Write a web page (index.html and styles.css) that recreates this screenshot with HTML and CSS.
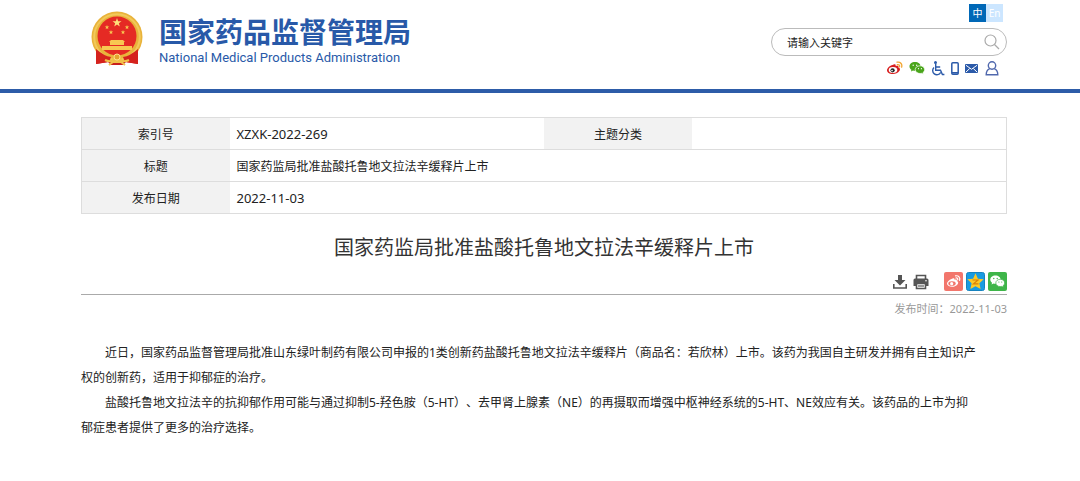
FILE: index.html
```
<!DOCTYPE html>
<html lang="zh-CN">
<head>
  <meta charset="UTF-8">
  <meta name="viewport" content="width=device-width, initial-scale=1">
  <title>国家药监局批准盐酸托鲁地文拉法辛缓释片上市</title>
  <link rel="stylesheet" href="styles.css">
</head>
<body>

  <header class="header">
    <a class="logo" href="#">
      <svg class="emblem" viewBox="0 0 52 56" aria-hidden="true">
        <path d="M6 35 L5 53 L17 51 L20 54 H32 L35 51 L47 53 L46 35Z" fill="#c91f1c"/>
        <circle cx="26" cy="26" r="25.500" fill="#e9b33b"/>
        <circle cx="26" cy="26" r="22.800" fill="none" stroke="#f2c95a" stroke-width="2"/>
        <circle cx="26" cy="25" r="19.500" fill="#e52a24"/>
        <path d="M26 7l1.100 3.200h3.400l-2.700 2 1 3.300-2.800-2-2.800 2 1-3.300-2.700-2h3.400z" fill="#ffe07a"/>
        <g fill="#f8c851">
          <path id="star" d="M16 14l.6 1.600h1.700l-1.400 1 .5 1.700-1.400-1-1.400 1 .5-1.700-1.400-1h1.700z"/>
          <use href="#star" x="4" y="5"/>
          <use href="#star" x="16" y="5"/>
          <use href="#star" x="20"/>
          <path d="M20 29h12l2 2H18zM19 31h14v3H19zM11 35h30v4H11z"/>
        </g>
        <path d="M5 38Q13 45 20 46L18 51L5 53zM47 38Q39 45 32 46l2 5 13 2z" fill="#d5221d"/>
        <path d="M14 49q6 3 9-1l3-2 3 2q3 4 9 1M18 54l4-3h8l4 3" fill="none" stroke="#f1c14a" stroke-width="2"/>
        <circle cx="26" cy="46" r="3" fill="#e4a32f" stroke="#ffe08a"/>
      </svg>
      <span class="logo-text">
        <span class="logo-cn">国家药品监督管理局</span>
        <span class="logo-en">National Medical Products Administration</span>
      </span>
    </a>

    <div class="header-right">
      <nav class="lang">
        <a class="active" href="#">中</a>
        <a href="#">En</a>
      </nav>
      <form class="search">
        <input type="text" placeholder="请输入关键字" aria-label="请输入关键字">
        <button type="button" aria-label="搜索">
          <svg width="16" height="16" viewBox="0 0 16 16" fill="none" stroke="#aaa" stroke-width="1.200"><circle cx="6.500" cy="6.500" r="5.500"/><path d="M10.500 10.500L15 15"/></svg>
        </button>
      </form>
      <nav class="quick">
        <a href="#" aria-label="微博">
          <svg width="16" height="14" viewBox="0 0 16 14">
            <path d="M5.500 4C7.500 2.500 9 3 8.700 5c2-.8 3.300-.2 2.700 1.400C13 7 13.500 8.200 12.500 9.800 11 12 8.500 13 5.800 13 2.500 13 0 11.400 0 9.200 0 7.300 3 4.500 5.500 4z" fill="#d81e1e"/>
            <ellipse cx="6" cy="9" rx="4.300" ry="3" fill="#fff"/>
            <circle cx="5.600" cy="9.300" r="2.100" fill="#222"/><circle cx="5" cy="9.600" r=".8" fill="#fff"/>
            <path d="M10 1.200c3.200-.8 5.600 1.800 4.600 5M10.400 3.600c1.500-.3 2.500.7 2.100 2.200" fill="none" stroke="#f2a531" stroke-width="1.300" stroke-linecap="round"/>
          </svg>
        </a>
        <a href="#" aria-label="微信">
          <svg width="16" height="14" viewBox="0 0 16 14">
            <path d="M6 1C2.600 1 .5 3 .5 5.400c0 1.400.7 2.500 1.900 3.300L2 10.500l2-1c.7.200 1.300.3 2 .3C9.300 9.800 11.500 8 11.500 5.400S9.300 1 6 1z" fill="#4aa51b"/>
            <path d="M11 4.800c-2.800 0-4.800 1.700-4.800 3.800s2 3.900 4.800 3.900c.6 0 1.100-.1 1.600-.2l1.700.9-.4-1.500c1-.7 1.700-1.800 1.700-3.100 0-2.100-2-3.800-4.600-3.800z" fill="#4aa51b" stroke="#fff" stroke-width=".7"/>
            <g fill="#fff"><circle cx="4.200" cy="4.200" r=".7"/><circle cx="7.700" cy="4.200" r=".7"/><circle cx="9.500" cy="7.700" r=".6"/><circle cx="12.400" cy="7.700" r=".6"/></g>
          </svg>
        </a>
        <a href="#" aria-label="无障碍">
          <svg width="14" height="15" viewBox="0 0 14 15" fill="none" stroke="#2b5aa9" stroke-width="1.400">
            <circle cx="4.500" cy="1.600" r="1.500" fill="#2b5aa9" stroke="none"/><path d="M4.700 3v6.300h4.800l1.900 4.200h2M4.700 6h4.500M3 6.500a4.200 4.200 0 1 0 6.600 5"/>
          </svg>
        </a>
        <a href="#" aria-label="移动端">
          <svg width="8" height="13" viewBox="0 0 8 13"><rect x=".8" y=".8" width="6.400" height="11.400" rx="1" fill="#fff" stroke="#2b5aa9" stroke-width="1.500"/><path d="M1 10.800h6" stroke="#2b5aa9" stroke-width="1.600"/></svg>
        </a>
        <a href="#" aria-label="邮箱">
          <svg width="13" height="9" viewBox="0 0 13 9"><rect width="13" height="9" rx="1" fill="#2b5aa9"/><path d="M1 1.300l5.500 4 5.500-4M1 8l3.700-3.500M12 8L8.300 4.500" fill="none" stroke="#fff"/></svg>
        </a>
        <a class="user" href="#" aria-label="个人中心">
          <svg width="14" height="15" viewBox="0 0 14 15" fill="none" stroke="#5068ad" stroke-width="1.400"><circle cx="7" cy="4.500" r="3.700"/><path d="M4.800 7.700C2.500 8.700 1.200 10.500 1.200 13.800h11.600c0-3.300-1.300-5.100-3.600-6.100"/></svg>
        </a>
      </nav>
    </div>
  </header>

  <main class="content">
    <table class="info">
      <tr>
        <th scope="row">索引号</th>
        <td>XZXK-2022-269</td>
        <th scope="row">主题分类</th>
        <td></td>
      </tr>
      <tr>
        <th scope="row">标题</th>
        <td class="cn" colspan="3">国家药监局批准盐酸托鲁地文拉法辛缓释片上市</td>
      </tr>
      <tr>
        <th scope="row">发布日期</th>
        <td colspan="3">2022-11-03</td>
      </tr>
    </table>

    <h1>国家药监局批准盐酸托鲁地文拉法辛缓释片上市</h1>

    <div class="tools">
      <button type="button" aria-label="下载">
        <svg width="14" height="16" viewBox="0 0 14 16" fill="#555"><path d="M5 1h4v5h3.500L7 11.500 1.500 6H5z"/><path d="M.8 10v4h12.400v-4" fill="none" stroke="#555" stroke-width="1.600"/></svg>
      </button>
      <button type="button" aria-label="打印">
        <svg width="16" height="16" viewBox="0 0 16 16"><path d="M3.500 5V1.500h9V5M3.500 9.500v5h9v-5z" fill="#fff" stroke="#555" stroke-width="1.600"/><path d="M2 4.500h12a1.500 1.500 0 0 1 1.500 1.500v6H13V9H3v3H.5V6A1.500 1.500 0 0 1 2 4.500z" fill="#555"/><path d="M5 12h6" stroke="#555" stroke-width="1.200"/><circle cx="13" cy="6.700" r=".8" fill="#fff"/></svg>
      </button>
      <a class="share first" href="#" aria-label="分享到微博">
        <svg width="19" height="19" viewBox="0 0 19 19">
          <rect width="19" height="19" rx="2" fill="#f2766c"/>
          <path d="M7.500 7c1.800-1.400 3.400-1 3 .8 1.700-.6 2.800 0 2.300 1.300 1.400.5 1.800 1.600 1 2.900-1.200 1.900-3.300 2.800-5.800 2.800-3 0-5-1.300-5-3.200C3 9.900 5.300 7.600 7.500 7z" fill="#fff"/>
          <ellipse cx="8" cy="11.500" rx="3.700" ry="2.300" fill="#f2766c"/><circle cx="7.700" cy="11.700" r="1.600" fill="#fff"/>
          <path d="M11.500 3.900c3-.7 5 1.600 4.100 4.500M11.900 6c1.500-.2 2.100.7 1.800 1.900" fill="none" stroke="#fff" stroke-width="1.200" stroke-linecap="round"/>
        </svg>
      </a>
      <a class="share" href="#" aria-label="分享到QQ空间">
        <svg width="19" height="19" viewBox="0 0 19 19">
          <rect x=".5" y=".5" width="18" height="18" rx="2" fill="#189be2" stroke="#1683bf"/>
          <path d="M9.500 1.300l2.400 5.400 5.800.6-4.300 3.900 1.200 5.900-5.100-2.900-5.100 2.900 1.200-5.900-4.300-3.900 5.800-.6z" fill="#fcc927"/>
          <path d="M6.500 8h5.500l-4.500 3.800h5" fill="none" stroke="#d98207" stroke-width="1.200"/>
        </svg>
      </a>
      <a class="share" href="#" aria-label="分享到微信">
        <svg width="19" height="19" viewBox="0 0 19 19">
          <rect width="19" height="19" rx="2" fill="#3eb549"/>
          <path d="M7.500 3.500C4.500 3.500 2.300 5.300 2.300 7.600c0 1.300.6 2.400 1.700 3.100l-.4 1.700 1.900-1c.6.200 1.300.3 2 .3 2.900 0 5.100-1.800 5.100-4.100S10.400 3.500 7.500 3.500z" fill="#fff"/>
          <path d="M12.300 7.300c-2.500 0-4.500 1.600-4.500 3.600s2 3.700 4.500 3.700c.5 0 1-.1 1.500-.2l1.600.9-.4-1.500c1-.7 1.600-1.700 1.600-2.900 0-2-1.800-3.600-4.300-3.600z" fill="#fff" stroke="#3eb549" stroke-width=".7"/>
          <g fill="#3eb549"><circle cx="5.800" cy="6.500" r=".7"/><circle cx="9.200" cy="6.500" r=".7"/><circle cx="10.900" cy="10" r=".6"/><circle cx="13.700" cy="10" r=".6"/></g>
        </svg>
      </a>
    </div>

    <div class="date">发布时间：2022-11-03</div>

    <article class="text">
      <p>近日，国家药品监督管理局批准山东绿叶制药有限公司申报的1类创新药盐酸托鲁地文拉法辛缓释片（商品名：若欣林）上市。该药为我国自主研发并拥有自主知识产权的创新药，适用于抑郁症的治疗。</p>
      <p>盐酸托鲁地文拉法辛的抗抑郁作用可能与通过抑制5-羟色胺（5-HT）、去甲肾上腺素（NE）的再摄取而增强中枢神经系统的5-HT、NE效应有关。该药品的上市为抑郁症患者提供了更多的治疗选择。</p>
    </article>
  </main>

</body>
</html>
```
FILE: styles.css
```
* {
  box-sizing: border-box;
}

body {
  margin: 0;
  background-color: #fff;
  color: #222;
  font-family: "Noto Sans", "Noto Sans CJK SC", sans-serif;
  font-size: 12px;
}

a {
  color: inherit;
  text-decoration: none;
}

svg {
  display: block;
}

button {
  padding: 0;
  border: none;
  background: none;
  cursor: pointer;
}

.header {
  display: flex;
  justify-content: space-between;
  align-items: flex-start;
  padding: 4px 73px 13px 91px;
  border-bottom: 4px solid #2d5ca8;
}

.logo {
  display: flex;
  gap: 16px;
  margin-top: 7px;
  color: #2859a8;
}

.emblem {
  width: 52px;
  height: 56px;
}

.logo-text {
  padding-top: 3px;
}

.logo-cn,
.logo-en {
  display: block;
  white-space: nowrap;
}

.logo-cn {
  font-family: "Noto Sans CJK SC", sans-serif;
  font-size: 28px;
  font-weight: bold;
  line-height: 34px;
}

.logo-en {
  font-family: Roboto, sans-serif;
  font-size: 13px;
  line-height: 20px;
}

.header-right {
  width: 236px;
}

.lang {
  display: flex;
  justify-content: flex-end;
  padding-right: 4px;
}

.lang a {
  width: 17px;
  background-color: #cce6ff;
  color: #fff;
  font-size: 10px;
  line-height: 18px;
  text-align: center;
}

.lang .active {
  background-color: #0068b7;
}

.search {
  display: flex;
  align-items: center;
  height: 28px;
  margin-top: 6px;
  padding: 0 6px 0 15px;
  border: 1px solid #bbb;
  border-radius: 14px;
}

.search input {
  flex: 1;
  min-width: 0;
  padding: 0;
  border: none;
  outline: none;
  background: none;
  font-family: inherit;
  font-size: 11px;
}

.search input::placeholder {
  color: #222;
}

.quick {
  display: flex;
  justify-content: flex-end;
  align-items: center;
  gap: 6px;
  height: 16px;
  margin-top: 4px;
  padding-right: 8px;
}

.quick .user {
  margin-left: 1px;
}

.content {
  padding: 24px 73px 40px 81px;
}

.info {
  width: 100%;
  table-layout: fixed;
  border: 1px solid #ddd;
  border-collapse: collapse;
}

.info tr {
  border-bottom: 1px solid #ddd;
}

.info th,
.info td {
  padding: 4px 7px 3px;
  line-height: 24px;
}

.info th {
  width: 16%;
  background-color: #f2f2f2;
  font-weight: normal;
}

.info td {
  font-size: 13px;
}

.info th,
.info .cn {
  padding-top: 5px;
  padding-bottom: 2px;
  font-size: 12px;
}

h1 {
  margin: 18px 0 8px;
  color: #333;
  font-size: 20px;
  font-weight: normal;
  line-height: 32px;
  text-align: center;
}

.tools {
  display: flex;
  justify-content: flex-end;
  align-items: center;
  gap: 6px;
  padding-bottom: 3px;
  border-bottom: 1px solid #aaa;
}

.tools .share {
  margin-left: -3px;
}

.tools .first {
  margin-left: 9px;
}

.date {
  margin-top: 4px;
  color: #999;
  font-size: 11px;
  line-height: 20px;
  text-align: right;
}

.text {
  margin-top: 21px;
  padding-right: 28px;
  text-spacing-trim: space-all;
}

.text p {
  margin: 0;
  line-height: 25px;
  text-indent: 2em;
}
```
